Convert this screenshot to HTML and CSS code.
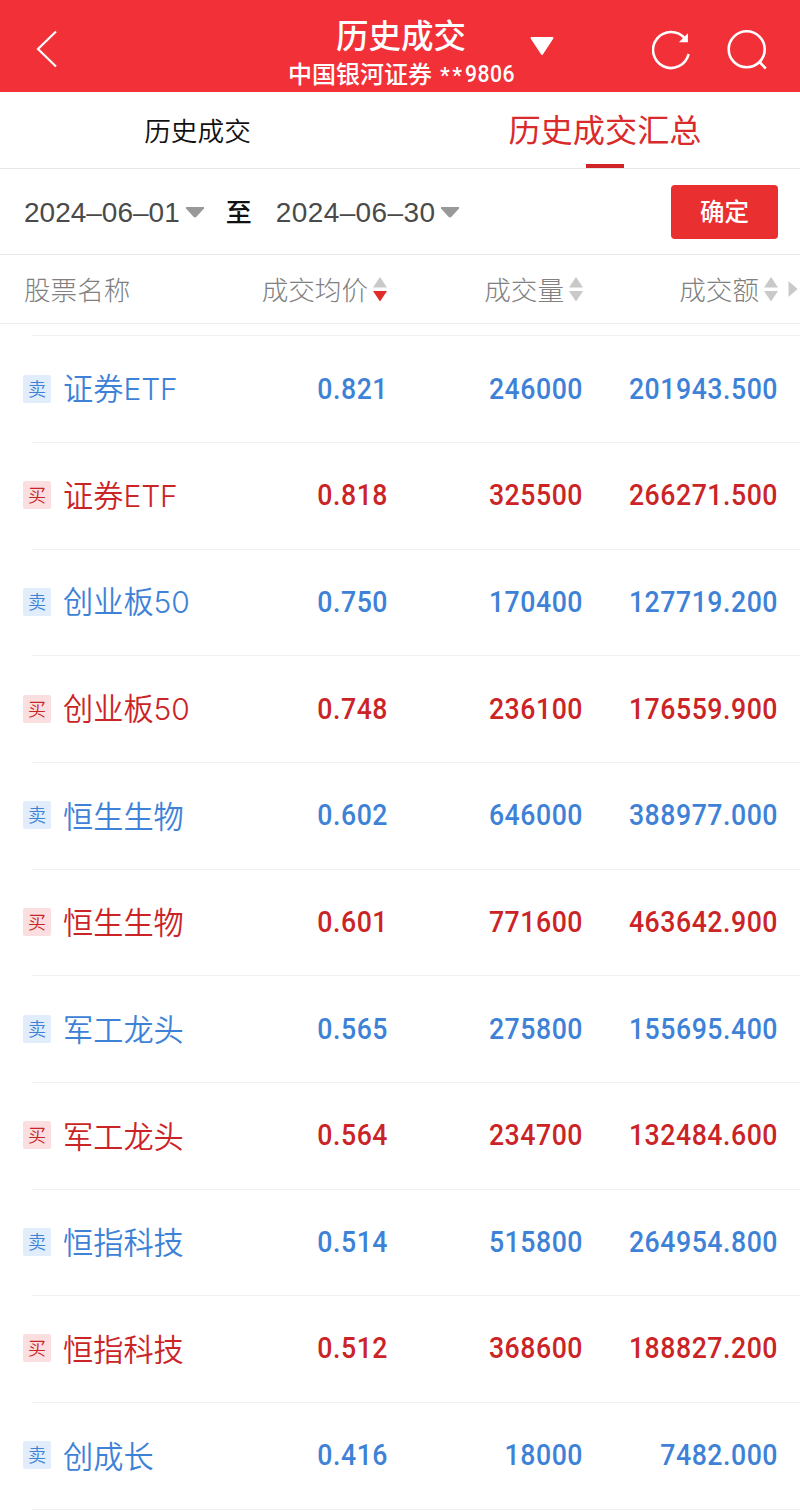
FILE: index.html
```html
<!DOCTYPE html>
<html lang="zh-CN">
<head>
    <meta charset="UTF-8">
    <meta name="viewport" content="width=device-width, initial-scale=1.0">
    <title>历史成交</title>
    <link rel="stylesheet" href="styles.css">
</head>
<body>

    <header class="topbar">
        <svg class="icon-back" width="24" height="40" viewBox="0 0 24 40"><path d="M21 1.5 L3 19 L21 36.5" /></svg>
        <div class="account">
            <h1>历史成交</h1>
            <p>中国银河证券 <span class="stars">**</span><span class="account-no">9806</span></p>
        </div>
        <svg class="icon-switch" width="26" height="20" viewBox="0 0 26 20"><path d="M2.5 2 H23.5 L13 18 Z" /></svg>
        <svg class="icon-refresh" width="42" height="42" viewBox="0 0 42 42">
            <path d="M33 9.6 A18 18 0 1 0 36.6 25" />
            <path class="arrow" d="M35.2 6 V12.6 H28.6 Z" />
        </svg>
        <svg class="icon-search" width="42" height="42" viewBox="0 0 42 42">
            <circle cx="20.7" cy="20.3" r="18" />
            <path d="M33 32.5 L39.7 39.5" />
        </svg>
    </header>

    <nav class="tabs">
        <a class="tab">历史成交</a>
        <a class="tab active">历史成交汇总</a>
    </nav>

    <div class="filter">
        <span class="date">2024–06–01</span>
        <svg class="caret" width="18" height="11" viewBox="0 0 18 11"><path d="M0 0 H18 V1.5 L10.5 9.8 Q9 11 7.5 9.8 L0 1.5 Z" /></svg>
        <span class="to">至</span>
        <span class="date date-end">2024–06–30</span>
        <svg class="caret" width="18" height="11" viewBox="0 0 18 11"><path d="M0 0 H18 V1.5 L10.5 9.8 Q9 11 7.5 9.8 L0 1.5 Z" /></svg>
        <button class="confirm">确定</button>
    </div>

    <div class="list-head">
        <span class="col-name">股票名称</span>
        <span class="col">成交均价<svg class="sort desc" width="14" height="25" viewBox="0 0 14 25"><path class="up" d="M0 10.5 L7 0 L14 10.5 Z" /><path class="down" d="M0 14 L7 24.5 L14 14 Z" /></svg></span>
        <span class="col">成交量<svg class="sort" width="14" height="25" viewBox="0 0 14 25"><path class="up" d="M0 10.5 L7 0 L14 10.5 Z" /><path class="down" d="M0 14 L7 24.5 L14 14 Z" /></svg></span>
        <span class="col">成交额<svg class="sort" width="14" height="25" viewBox="0 0 14 25"><path class="up" d="M0 10.5 L7 0 L14 10.5 Z" /><path class="down" d="M0 14 L7 24.5 L14 14 Z" /></svg></span>
        <svg class="more" width="10" height="18" viewBox="0 0 10 18"><path d="M0.5 1 L9.5 9 L0.5 17 Z" /></svg>
    </div>

    <div class="list" id="list">
        <!-- Les lignes sont ajoutées par le script -->
    </div>

    <script src="script.js"></script>

</body>
</html>
```

FILE: script.js
```js
const trades = [
    { side: 'sell', name: '证券ETF', price: '0.821', volume: '246000', amount: '201943.500' },
    { side: 'buy', name: '证券ETF', price: '0.818', volume: '325500', amount: '266271.500' },
    { side: 'sell', name: '创业板50', price: '0.750', volume: '170400', amount: '127719.200' },
    { side: 'buy', name: '创业板50', price: '0.748', volume: '236100', amount: '176559.900' },
    { side: 'sell', name: '恒生生物', price: '0.602', volume: '646000', amount: '388977.000' },
    { side: 'buy', name: '恒生生物', price: '0.601', volume: '771600', amount: '463642.900' },
    { side: 'sell', name: '军工龙头', price: '0.565', volume: '275800', amount: '155695.400' },
    { side: 'buy', name: '军工龙头', price: '0.564', volume: '234700', amount: '132484.600' },
    { side: 'sell', name: '恒指科技', price: '0.514', volume: '515800', amount: '264954.800' },
    { side: 'buy', name: '恒指科技', price: '0.512', volume: '368600', amount: '188827.200' },
    { side: 'sell', name: '创成长', price: '0.416', volume: '18000', amount: '7482.000' }
];

const list = document.getElementById('list');
list.innerHTML = '';

trades.forEach(trade => {
    const row = document.createElement('div');
    row.className = 'row ' + trade.side;
    // Latin letters and digits of the name use a wider face
    const name = trade.name.replace(/[A-Z0-9]+/g, '<span class="latin">$&</span>');
    row.innerHTML = `
        <span class="badge">${trade.side === 'sell' ? '卖' : '买'}</span>
        <span class="name">${name}</span>
        <span class="num">${trade.price}</span>
        <span class="num">${trade.volume}</span>
        <span class="num">${trade.amount}</span>
    `;
    list.appendChild(row);
});
```

FILE: styles.css
```css
* {
    box-sizing: border-box;
}

body {
    margin: 0;
    background-color: #fff;
    font-family: "Noto Sans CJK SC", sans-serif;
    color: #111;
}

/* Header */
.topbar {
    display: grid;
    grid-template-columns: 288px 228px 136px 76px 1fr;
    height: 92px;
    background-color: #f23038;
    color: #fff;
}

.topbar svg {
    fill: none;
    stroke: #fff;
    stroke-width: 2.6;
}

.topbar .icon-back {
    margin: 30px 0 0 35px;
    stroke-width: 2.2;
}

.account {
    white-space: nowrap;
}

.account h1 {
    margin: 14px 0 0 48px;
    font-size: 32.5px;
    font-weight: 500;
    line-height: 40px;
}

.account p {
    display: flex;
    margin: 4px 0 0;
    font-size: 24px;
    font-weight: 500;
    line-height: 30px;
}

.stars {
    padding: 3px 0 0 8px;
    font-family: Roboto, sans-serif;
    font-size: 22px;
    letter-spacing: 2.5px;
}

.account-no {
    padding-top: 1px;
    font-family: Roboto, sans-serif;
    font-size: 23.5px;
    letter-spacing: 0.5px;
    transform: scaleX(0.9);
    transform-origin: left;
}

.topbar .icon-switch {
    margin: 36px 0 0 13px;
    fill: #fff;
    stroke-width: 2;
    stroke-linejoin: round;
}

.icon-refresh,
.icon-search {
    margin-top: 29px;
}

.topbar .arrow {
    fill: #fff;
    stroke-width: 1.4;
}

.icon-search {
    margin-left: -2px;
}

/* Tabs */
.tabs {
    display: flex;
    height: 77px;
    border-bottom: 1px solid #e6e6e6;
}

.tab {
    width: 50%;
    height: 76px;
    padding-right: 5px;
    text-align: center;
    font-size: 26.7px;
    font-weight: 350;
    line-height: 75px;
}

.tab.active {
    display: flex;
    flex-direction: column;
    align-items: center;
    padding: 0 0 0 10px;
    font-size: 32.2px;
    font-weight: 400;
    line-height: 73px;
    color: #d92a2c;
}

.tab.active::after {
    content: "";
    width: 38px;
    height: 4px;
    margin-top: -1px;
    background-color: #cf2528;
}

/* Date range */
.filter {
    display: flex;
    align-items: center;
    height: 86px;
    padding: 0 22px 0 24px;
    border-bottom: 1px solid #e6e6e6;
}

.date {
    padding-top: 2px;
    font-family: "Liberation Sans", Arial, sans-serif;
    font-size: 28px;
    color: #4a4a4a;
}

.date-end {
    letter-spacing: 0.4px;
}

.caret {
    margin: 1px 0 0 6px;
    fill: #999;
}

.to {
    margin: 0 24px 2px 22px;
    font-size: 26px;
    font-weight: 500;
}

.confirm {
    width: 107px;
    height: 54px;
    margin-left: auto;
    padding: 0 0 2px;
    border: none;
    border-radius: 4px;
    background-color: #e92f30;
    color: #fff;
    font-family: inherit;
    font-size: 24.5px;
    font-weight: 500;
}

/* Column titles */
.list-head {
    display: grid;
    grid-template-columns: 180px 183px 196px 195px 1fr;
    align-items: center;
    height: 69px;
    padding: 0 0 1px 24px;
    border-bottom: 1px solid #ececec;
    font-size: 26.6px;
    font-weight: 300;
    color: #808080;
}

.col-name,
.col {
    line-height: 38px;
}

.col {
    display: flex;
    align-items: center;
    justify-content: flex-end;
    gap: 5px;
}

.sort {
    margin-top: 1px;
    fill: #c9c9c9;
}

.sort.desc .down {
    fill: #e22b2b;
}

.more {
    margin-left: 10px;
    fill: #c9c9c9;
}

/* Trades */
.list {
    padding-top: 11.4px;
}

.row {
    display: grid;
    grid-template-columns: 40px 140px 184px 195px 195px;
    align-items: center;
    height: 106.65px;
    padding-left: 23px;
    background: linear-gradient(#f1f1f1, #f1f1f1) 32px 0 / 100% 1px no-repeat;
}

.row:last-child {
    height: 108px;
    padding-bottom: 1px;
    background: linear-gradient(#f1f1f1, #f1f1f1) 32px 0 / 100% 1px no-repeat,
        linear-gradient(#f1f1f1, #f1f1f1) 32px 100% / 100% 1px no-repeat;
}

.sell {
    color: #3e82d8;
}

.buy {
    color: #cb2427;
}

.badge {
    width: 28px;
    height: 28px;
    border-radius: 2px;
    text-align: center;
    font-size: 18px;
    font-weight: 350;
    line-height: 27px;
}

.sell .badge {
    background-color: #e1edfa;
}

.buy .badge {
    background-color: #fbdedf;
}

.name {
    padding-bottom: 1px;
    font-size: 30.2px;
    font-weight: 350;
    line-height: 40px;
    white-space: nowrap;
}

.latin {
    font-family: Inter, sans-serif;
    font-size: 30px;
    font-weight: 350;
    letter-spacing: -0.1px;
}

.num {
    padding-bottom: 1px;
    font-family: Roboto, sans-serif;
    font-size: 30.3px;
    font-weight: 500;
    letter-spacing: 0.6px;
    margin-right: -1px;
    text-align: right;
    transform: scaleX(0.88);
    transform-origin: right;
}
```
